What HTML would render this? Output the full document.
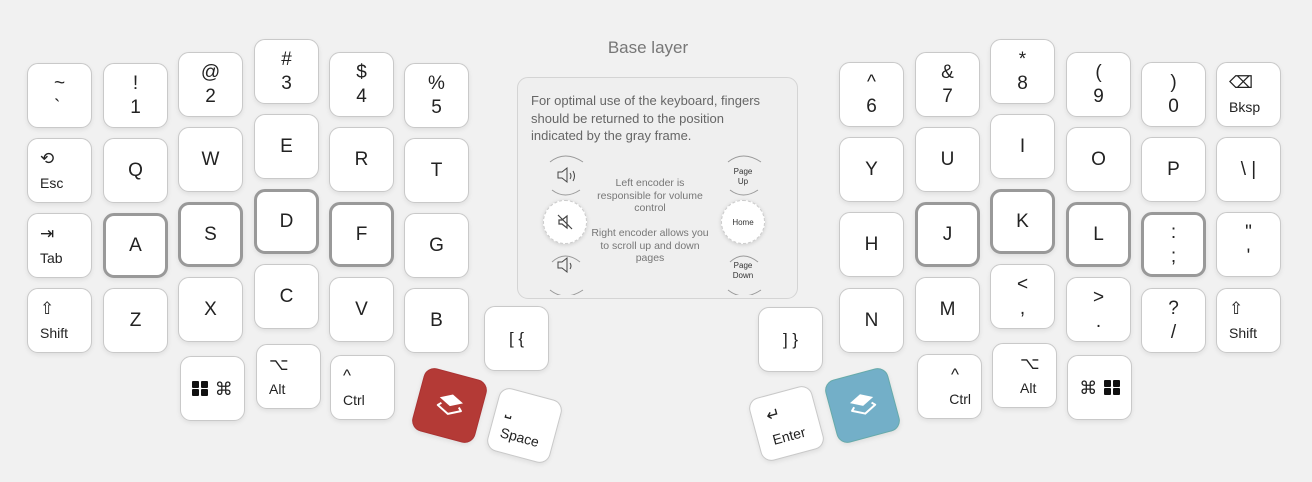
<!DOCTYPE html>
<html><head><meta charset="utf-8"><style>
*{margin:0;padding:0;box-sizing:border-box}
body{width:1312px;height:482px;background:#f1f1f1;font-family:"Liberation Sans",sans-serif;position:relative;overflow:hidden;color:#222}
.k{position:absolute;width:65px;height:65px;background:#fff;border:1px solid #c9c9c9;border-radius:11px;box-shadow:0 2px 5px rgba(0,0,0,.08);display:flex;flex-direction:column;align-items:center;justify-content:center;font-size:19px;line-height:24px}
.h{border:3px solid #999}
.m{align-items:flex-start;justify-content:flex-end;padding:0 0 10px 12px;font-size:14px;line-height:18px}
.m .i{font-size:17px;margin-bottom:6px}
.win{display:inline-grid;grid-template-columns:7px 7px;gap:1.5px;vertical-align:middle}
.win i{width:7px;height:7px;background:#111;border-radius:1px}
</style></head><body>
<div style="position:absolute;left:560px;top:38px;width:176px;text-align:center;font-size:17px;color:#777">Base layer</div>
<div style="position:absolute;left:517px;top:77px;width:281px;height:222px;border:1px solid #d4d4d4;border-radius:11px;background:#efefef"></div>
<div style="position:absolute;left:531px;top:92px;width:238px;font-size:13px;line-height:17.5px;color:#666">For optimal use of the keyboard, fingers should be returned to the position indicated by the gray frame.</div>
<div style="position:absolute;left:590px;top:177px;width:120px;text-align:center;font-size:10.5px;line-height:12.5px;color:#777">Left encoder is responsible for volume control</div>
<div style="position:absolute;left:590px;top:227px;width:120px;text-align:center;font-size:10.5px;line-height:12.5px;color:#777">Right encoder allows you to scroll up and down pages</div>
<div style="position:absolute;left:543px;top:200px;width:44px;height:44px;border-radius:50%;background:#fff;border:1px dashed #ccc;box-shadow:0 1px 4px rgba(0,0,0,.15)"></div>
<svg style="position:absolute;left:555px;top:212px" width="20" height="20" fill="none" stroke="#444" stroke-width="1.2"><path d="M4 8h3l5-4v12l-5-4H4z M3 3l14 14"/></svg>
<div style="position:absolute;left:721px;top:200px;width:44px;height:44px;border-radius:50%;background:#fff;border:1px dashed #ccc;box-shadow:0 1px 4px rgba(0,0,0,.15);display:flex;align-items:center;justify-content:center;font-size:8px;color:#333">Home</div>
<svg style="position:absolute;left:540px;top:150px" width="240" height="145" fill="none" stroke="#999" stroke-width="1">
<path d="M10 12 Q25 0 43 12 M12 40 Q25 50 40 40 M12 112 Q25 100 40 112 M10 140 Q25 152 43 140"/>
<path d="M188 12 Q203 0 221 12 M190 40 Q203 50 218 40 M190 112 Q203 100 218 112 M188 140 Q203 152 221 140"/>
<path d="M18 22h4l5-4v14l-5-4h-4z M18 112h4l5-4v14l-5-4h-4z" stroke="#444"/>
<path d="M30 23q2 3 0 6 M33 21q3 5 0 10 M30 113q2 3 0 6" stroke="#444"/>
</svg>
<div style="position:absolute;left:723px;top:167px;width:40px;text-align:center;font-size:8px;line-height:10px;color:#333">Page<br>Up</div>
<div style="position:absolute;left:723px;top:261px;width:40px;text-align:center;font-size:8px;line-height:10px;color:#333">Page<br>Down</div>

<!-- left -->
<div class="k" style="left:27px;top:63px">~<br>`</div>
<div class="k" style="left:103px;top:63px"><span>!</span><span>1</span></div>
<div class="k" style="left:178px;top:52px"><span>@</span><span>2</span></div>
<div class="k" style="left:254px;top:39px"><span>#</span><span>3</span></div>
<div class="k" style="left:329px;top:52px"><span>$</span><span>4</span></div>
<div class="k" style="left:404px;top:63px"><span>%</span><span>5</span></div>
<div class="k m" style="left:27px;top:138px"><span class="i">⟲</span>Esc</div>
<div class="k" style="left:103px;top:138px">Q</div>
<div class="k" style="left:178px;top:127px">W</div>
<div class="k" style="left:254px;top:114px">E</div>
<div class="k" style="left:329px;top:127px">R</div>
<div class="k" style="left:404px;top:138px">T</div>
<div class="k m" style="left:27px;top:213px"><span class="i">⇥</span>Tab</div>
<div class="k h" style="left:103px;top:213px">A</div>
<div class="k h" style="left:178px;top:202px">S</div>
<div class="k h" style="left:254px;top:189px">D</div>
<div class="k h" style="left:329px;top:202px">F</div>
<div class="k" style="left:404px;top:213px">G</div>
<div class="k m" style="left:27px;top:288px"><span class="i">⇧</span>Shift</div>
<div class="k" style="left:103px;top:288px">Z</div>
<div class="k" style="left:178px;top:277px">X</div>
<div class="k" style="left:254px;top:264px">C</div>
<div class="k" style="left:329px;top:277px">V</div>
<div class="k" style="left:404px;top:288px">B</div>
<div class="k" style="left:484px;top:306px;font-size:17px">[ {</div>
<div class="k" style="left:180px;top:356px;font-size:18px;flex-direction:row;gap:7px"><span class="win"><i></i><i></i><i></i><i></i></span>⌘</div>
<div class="k m" style="left:256px;top:344px"><span class="i">⌥</span>Alt</div>
<div class="k m" style="left:330px;top:355px"><span class="i">^</span>Ctrl</div>
<div class="k" style="left:417px;top:373px;background:#b43a36;border-color:#a33;transform:rotate(15deg)"><svg width="30" height="28" viewBox="0 0 30 28"><path d="M15 2 L27 8 L15 14 L3 8 Z" fill="#fff"/><path d="M6 13 L3 16 L15 22 L27 16 L24 13" fill="none" stroke="#fff" stroke-width="2" stroke-linejoin="round"/></svg></div>
<div class="k m" style="left:492px;top:393px;transform:rotate(15deg);padding-left:10px"><span class="i">⎵</span>Space</div>

<!-- right -->
<div class="k" style="left:839px;top:62px"><span>^</span><span>6</span></div>
<div class="k" style="left:915px;top:52px"><span>&amp;</span><span>7</span></div>
<div class="k" style="left:990px;top:39px"><span>*</span><span>8</span></div>
<div class="k" style="left:1066px;top:52px"><span>(</span><span>9</span></div>
<div class="k" style="left:1141px;top:62px"><span>)</span><span>0</span></div>
<div class="k m" style="left:1216px;top:62px"><span class="i">⌫</span>Bksp</div>
<div class="k" style="left:839px;top:137px">Y</div>
<div class="k" style="left:915px;top:127px">U</div>
<div class="k" style="left:990px;top:114px">I</div>
<div class="k" style="left:1066px;top:127px">O</div>
<div class="k" style="left:1141px;top:137px">P</div>
<div class="k" style="left:1216px;top:137px">\ |</div>
<div class="k" style="left:839px;top:212px">H</div>
<div class="k h" style="left:915px;top:202px">J</div>
<div class="k h" style="left:990px;top:189px">K</div>
<div class="k h" style="left:1066px;top:202px">L</div>
<div class="k h" style="left:1141px;top:212px"><span>:</span><span>;</span></div>
<div class="k" style="left:1216px;top:212px"><span>"</span><span>'</span></div>
<div class="k" style="left:839px;top:288px">N</div>
<div class="k" style="left:915px;top:277px">M</div>
<div class="k" style="left:990px;top:264px"><span>&lt;</span><span>,</span></div>
<div class="k" style="left:1066px;top:277px"><span>&gt;</span><span>.</span></div>
<div class="k" style="left:1141px;top:288px"><span>?</span><span>/</span></div>
<div class="k m" style="left:1216px;top:288px"><span class="i">⇧</span>Shift</div>
<div class="k" style="left:758px;top:307px;font-size:17px">] }</div>
<div class="k m" style="left:917px;top:354px;align-items:flex-end;padding-right:10px"><span class="i" style="margin-right:12px">^</span>Ctrl</div>
<div class="k m" style="left:992px;top:343px;padding-left:27px"><span class="i">⌥</span>Alt</div>
<div class="k" style="left:1067px;top:355px;font-size:18px;flex-direction:row;gap:7px">⌘<span class="win"><i></i><i></i><i></i><i></i></span></div>
<div class="k" style="left:830px;top:373px;background:#73afc8;border-color:#6aa;transform:rotate(-15deg)"><svg width="30" height="28" viewBox="0 0 30 28"><path d="M15 2 L27 8 L15 14 L3 8 Z" fill="#fff"/><path d="M6 13 L3 16 L15 22 L27 16 L24 13" fill="none" stroke="#fff" stroke-width="2" stroke-linejoin="round"/></svg></div>
<div class="k m" style="left:754px;top:391px;transform:rotate(-15deg);padding-left:14px"><span class="i">↵</span>Enter</div>
</body></html>
